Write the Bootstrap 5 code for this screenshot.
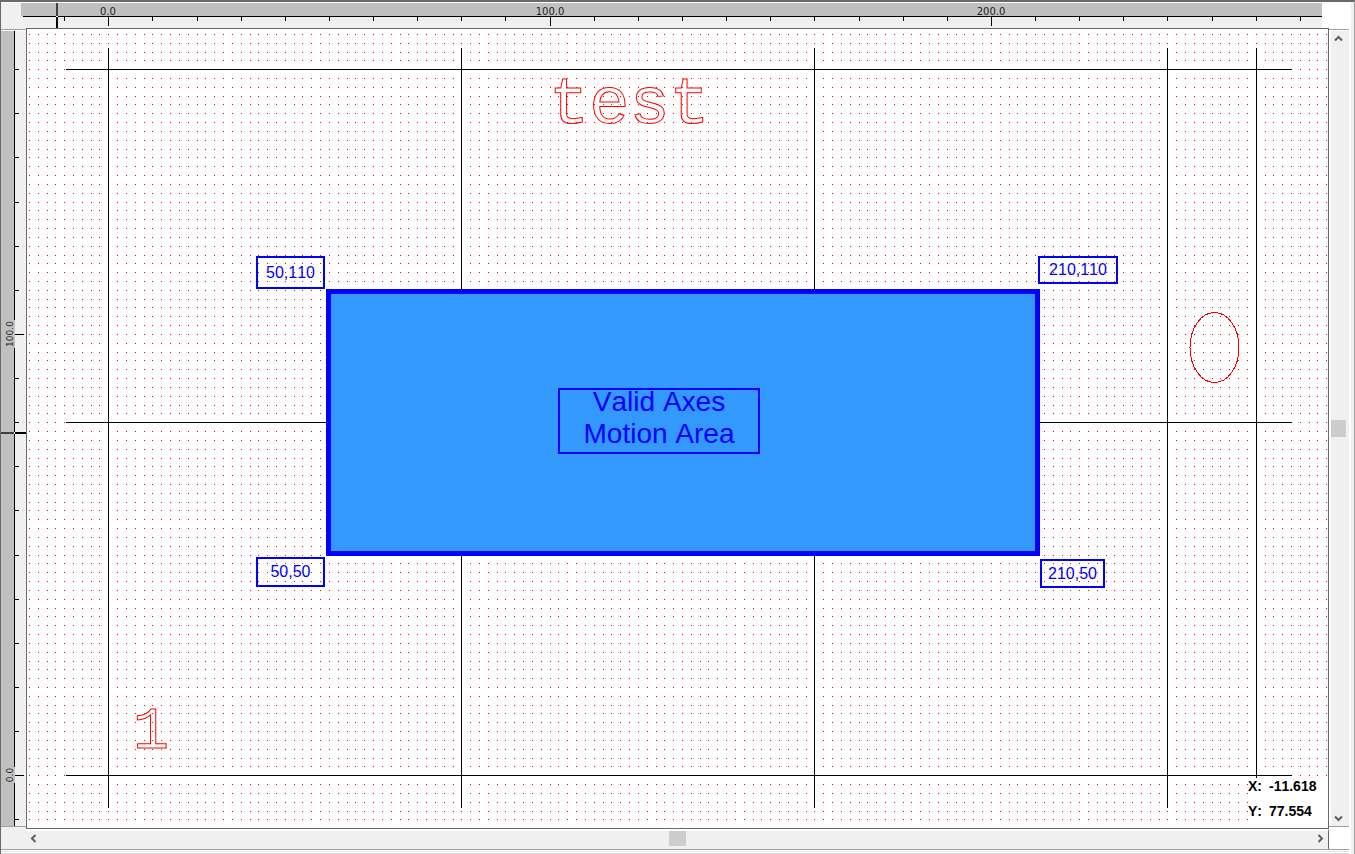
<!DOCTYPE html>
<html lang="en">
<head>
<meta charset="utf-8">
<meta name="viewport" content="width=device-width, initial-scale=1">
<title>Axes Motion Area</title>
<link rel="stylesheet" href="https://cdn.jsdelivr.net/npm/bootstrap@5.3.0/dist/css/bootstrap.min.css">
<style>
  :root { --edge: #696969; --line: #a0a0a0; --face: #f0f0f0; --ruler: #c0c0c0; --ink: #0000ff; }
  body { background: var(--face); font-family: "Liberation Sans", Arial, sans-serif; font-kerning: none; color: #000; }
  svg { display: block; }
  .outer { border-left: 1px solid var(--edge); border-top: 2px solid var(--edge); border-right: 1px solid var(--line); padding-right: 3px; }
  .inner { border-top: 1px solid #fff; border-right: 2px solid #fff; }
  .top-strip { height: 25px; }
  .corner { width: 20px; }
  .gap-right { width: 27px; background: #fff; }
  .side { width: 25px; padding-top: 1px; }
  .side-right { width: 20px; padding-top: 1px; background: #fff; }
  .side-box { border-top: 1px solid var(--line); border-bottom: 1px solid var(--line); margin-bottom: 2px; padding-top: 1px; background: #fff; min-height: 0; }
  .plane { border: 1px solid var(--edge); background: #fff; }
  .vbar { background: var(--face); margin-left: 2px; }
  .hrow { height: 20px; }
  .hbar { background: var(--face); border-top: 2px solid #fff; border-right: 1px solid var(--edge); }
  .foot { height: 5px; border-top: 1px solid var(--line); background: linear-gradient(#fff 1px, #e3e3e3 1px 2px, #fff 2px 3px, #d8d8d8 3px); }
  .step { border: 0; padding: 0; background: transparent; width: 15px; height: 15px; display: flex; align-items: center; justify-content: center; }
  .thumb { background: #cdcdcd; }
  .vbar .thumb { width: 15px; height: 17px; }
  .hbar .thumb { width: 17px; height: 15px; }
  .ruler-text { font: 10px "DejaVu Sans", sans-serif; fill: #222; text-anchor: middle; }
  .ruler-text.up { font-size: 9px; }
  .engraved { font: 67px "Liberation Mono", monospace; fill: none; stroke: #f00; stroke-width: 1; }
  .engraved.digit { font-size: 60px; }
  .tag { position: absolute; border: 2px solid var(--ink); color: var(--ink); font-size: 16px; line-height: 16px; display: flex; align-items: center; justify-content: center; }
  .zone { position: absolute; left: 299px; top: 260px; width: 714px; height: 267px; border: 5px solid var(--ink); background: #3399ff; }
  .zone-name { position: absolute; left: 227px; top: 94px; width: 202px; height: 66px; border: 2px solid var(--ink); color: var(--ink); font-size: 28px; font-weight: 400; line-height: 32px; text-align: center; margin: 0; display: flex; flex-direction: column; justify-content: flex-end; padding-bottom: 2px; }
  .readout { position: absolute; right: 0; bottom: 0; width: 80px; height: 50px; background: #fff; font-size: 14px; font-weight: 700; line-height: 25px; }
  .readout dl { display: grid; grid-template-columns: 21px 1fr; margin: -4px 0 0 0; }
  .readout dd { margin: 0; }
</style>
<script src="https://cdn.jsdelivr.net/npm/bootstrap@5.3.0/dist/js/bootstrap.bundle.min.js"></script>
</head>
<body>
<main class="outer vh-100 d-flex flex-column">
  <div class="inner flex-grow-1 d-flex flex-column overflow-hidden">
    <div class="top-strip d-flex">
      <div class="corner"></div>
      <svg id="rulerX" class="flex-grow-1" height="25" shape-rendering="crispEdges" aria-label="X ruler">
        <rect width="100%" height="13" fill="#c0c0c0"/>
        <rect x="2" y="13" width="100%" height="1" fill="#000"/>
        <path class="ticks"/>
        <rect x="35" y="0" width="2" height="13" fill="#404040"/>
        <rect x="35" y="13" width="2" height="1" fill="#fff"/>
        <rect x="35" y="14" width="2" height="11" fill="#000"/>
      </svg>
      <div class="gap-right"></div>
    </div>

    <div class="flex-grow-1 d-flex overflow-hidden">
      <div class="side d-flex flex-column">
        <div class="side-box flex-grow-1">
          <svg id="rulerY" width="25" height="100%" shape-rendering="crispEdges" aria-label="Y ruler">
            <rect width="25" height="100%" fill="#f0f0f0"/>
            <rect width="13" height="100%" fill="#c0c0c0"/>
            <rect x="13" width="1" height="100%" fill="#000"/>
            <path class="ticks"/>
            <rect x="0" y="401" width="13" height="2" fill="#404040"/>
            <rect x="13" y="401" width="1" height="2" fill="#fff"/>
            <rect x="14" y="401" width="11" height="2" fill="#000"/>
          </svg>
        </div>
      </div>

      <div id="plane" class="plane flex-grow-1 position-relative overflow-hidden">
        <svg class="position-absolute top-0 start-0" width="100%" height="100%">
          <path id="dots" fill="#ff0000" shape-rendering="crispEdges"/>
          <path id="grid" fill="#000" shape-rendering="crispEdges"/>
          <ellipse cx="1187.5" cy="318.5" rx="24.5" ry="35" fill="none" stroke="#f00" shape-rendering="crispEdges"/>
          <text class="engraved" x="522" y="94">test</text>
          <text class="engraved digit" x="106" y="719">1</text>
        </svg>
        <section class="zone">
          <h1 class="zone-name"><span>Valid Axes</span><span>Motion Area</span></h1>
        </section>
        <div class="tag" style="left:229px;top:227px;width:69px;height:33px">50,110</div>
        <div class="tag" style="left:1011px;top:227px;width:80px;height:28px">210,110</div>
        <div class="tag" style="left:229px;top:528px;width:69px;height:30px">50,50</div>
        <div class="tag" style="left:1013px;top:530px;width:65px;height:29px">210,50</div>
        <div class="readout">
          <dl><dt>X:</dt><dd>-11.618</dd><dt>Y:</dt><dd>77.554</dd></dl>
        </div>
      </div>

      <div class="side-right d-flex flex-column">
        <div class="side-box flex-grow-1 d-flex">
          <div class="vbar flex-grow-1 d-flex flex-column justify-content-between">
            <button class="step" type="button" aria-label="Scroll up"><svg width="9" height="7" viewBox="0 0 9 7"><path d="M1 5.5 4.5 2 8 5.5" fill="none" stroke="#606060" stroke-width="2"/></svg></button>
            <div class="thumb"></div>
            <button class="step" type="button" aria-label="Scroll down"><svg width="9" height="7" viewBox="0 0 9 7"><path d="M1 1.5 4.5 5 8 1.5" fill="none" stroke="#606060" stroke-width="2"/></svg></button>
          </div>
        </div>
      </div>
    </div>

    <div class="hrow d-flex">
      <div class="side"></div>
      <div class="hbar flex-grow-1 d-flex justify-content-between">
        <button class="step" type="button" aria-label="Scroll left"><svg width="7" height="9" viewBox="0 0 7 9"><path d="M5.5 1 2 4.500 5.500 8" fill="none" stroke="#606060" stroke-width="2"/></svg></button>
        <div class="thumb"></div>
        <button class="step" type="button" aria-label="Scroll right"><svg width="7" height="9" viewBox="0 0 7 9"><path d="M1.5 1 5 4.500 1.500 8" fill="none" stroke="#606060" stroke-width="2"/></svg></button>
      </div>
      <div class="side-right"></div>
    </div>
    <div class="foot"></div>
  </div>
</main>

<script>
  // Pixels per machine unit, and the origin inside the drawing plane.
  const unit = 4.413, originX = 81.3, originY = 746.25;
  const px = v => Math.round(originX + v * unit);
  const py = v => Math.round(originY - v * unit);
  const plane = document.getElementById('plane');

  function label(svg, text, x, y, up) {
    const t = document.createElementNS('http://www.w3.org/2000/svg', 'text');
    t.setAttribute('class', up ? 'ruler-text up' : 'ruler-text');
    t.setAttribute('x', x);
    t.setAttribute('y', y);
    if (up) t.setAttribute('transform', `rotate(-90 ${x} ${y})`);
    t.textContent = text;
    svg.append(t);
    return t;
  }

  function draw() {
    const w = plane.clientWidth, h = plane.clientHeight;
    const x0 = -Math.floor((originX - 1) / unit / 2) * 2;
    const y0 = -Math.floor((h - originY - 2) / unit / 2) * 2;
    let d = '';
    for (let x = x0; px(x) < w; x += 2)
      for (let y = y0; py(y) > 4; y += 2)
        d += `M${px(x)} ${py(y)}h1v1h-1z`;
    document.getElementById('dots').setAttribute('d', d);

    d = '';
    for (const x of [0, 80, 160, 240, 260]) d += `M${px(x)} 19h1v760h-1z`;
    for (const y of [0, 80, 160]) d += `M39 ${py(y)}h1226v1h-1226z`;
    document.getElementById('grid').setAttribute('d', d);

    const rx = document.getElementById('rulerX'), ry = document.getElementById('rulerY');
    document.querySelectorAll('.ruler-text, .label-back').forEach(n => n.remove());
    d = '';
    for (let v = -10; px(v) < w; v += 10) {
      const x = px(v) + 6;
      d += `M${x} 14h1v${v % 100 ? 4 : 9}h-1z`;
      if (v % 100 === 0) label(rx, v.toFixed(1), x, 12);
    }
    rx.querySelector('.ticks').setAttribute('d', d);
    d = '';
    for (let v = -10; py(v) > 10; v += 10) {
      const y = py(v) - 2;
      d += `M14 ${y}h${v % 100 ? 4 : 9}v1h-${v % 100 ? 4 : 9}z`;
      if (v % 100 === 0) {
        const s = v ? 28 : 16;
        const r = document.createElementNS('http://www.w3.org/2000/svg', 'rect');
        r.setAttribute('class', 'label-back');
        r.setAttribute('x', 13); r.setAttribute('y', y - s / 2);
        r.setAttribute('width', 1); r.setAttribute('height', s);
        r.setAttribute('fill', '#c0c0c0');
        ry.append(r);
        label(ry, v.toFixed(1), 12, y, true);
      }
    }
    ry.querySelector('.ticks').setAttribute('d', d);
  }
  draw();
  addEventListener('resize', draw);
</script>
</body>
</html>
